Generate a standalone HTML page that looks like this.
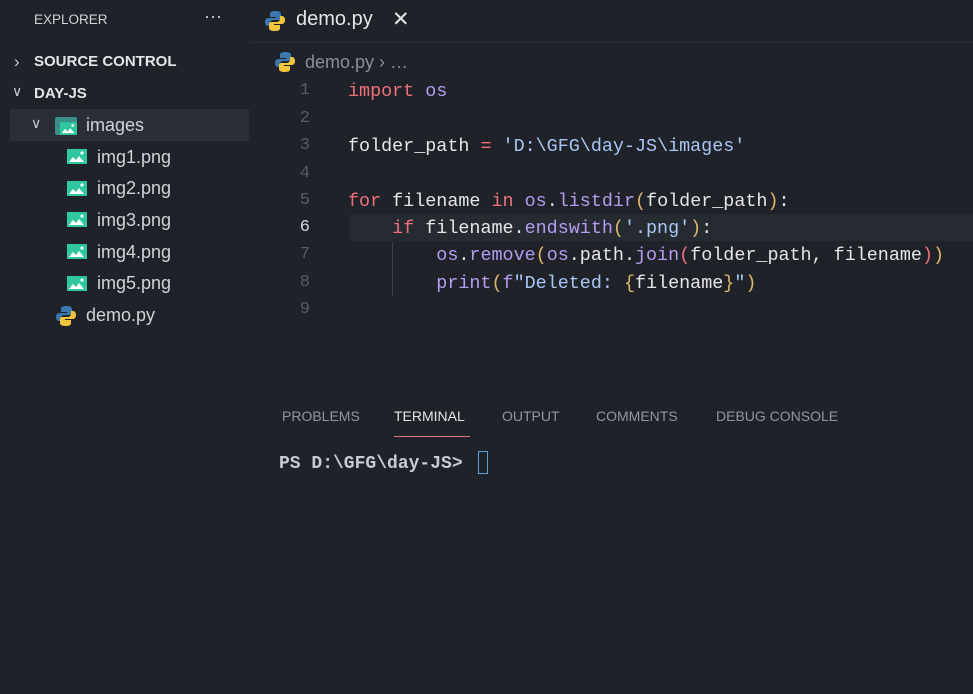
<!DOCTYPE html>
<html><head><style>
body{margin:0;width:973px;height:694px;background:#1f2228;font-family:"Liberation Sans",sans-serif;color:#d7dae0;overflow:hidden;position:relative}
.a{position:absolute;white-space:pre}
.m{font-family:"Liberation Mono",monospace;font-size:18.4px}
.k{color:#f0707a}.p{color:#b49cf0}.s{color:#a9c6f5}.y{color:#e2b86b}.t{color:#e6e6e6}
.ln{color:#565d6b;font-family:"Liberation Mono",monospace;font-size:17px;width:30px;text-align:right;left:280px}
.side{font-size:18px;color:#d0d3d8}
.img{position:absolute;width:20px;height:15px}
.tab{font-size:14px;top:408px}
</style></head><body>
<svg width="0" height="0" style="position:absolute"><defs><symbol id="im" viewBox="0 0 20 15"><rect width="20" height="15" fill="#2fc6a0"/><path d="M2 13l4-5 3 3 3-4 5 6z" fill="#fff"/><circle cx="15" cy="4" r="1.6" fill="#fff"/></symbol></defs></svg>
<div class="a" style="left:250px;top:42px;width:723px;height:1px;background:#2a2e35"></div>
<div class="a" style="left:34px;top:12px;font-size:13.5px;color:#d0d3d8">EXPLORER</div>
<div class="a" style="left:204px;top:6px;font-size:18px;color:#d0d3d8">···</div>
<svg class="a" style="left:265px;top:10px" width="20" height="22" viewBox="0 0 20 22"><path d="M10 1C5 1 5 3 5 4v3h6v1H3C1 8 0 10 0 12s1 4 3 4h2v-3c0-2 2-3 4-3h5c1 0 2-1 2-2V4c0-2-2-3-6-3z" fill="#3b78b0"/><path d="M10 21c5 0 5-2 5-3v-3H9v-1h8c2 0 3-2 3-4s-1-4-3-4h-2v3c0 2-2 3-4 3H6c-1 0-2 1-2 2v4c0 2 2 3 6 3z" fill="#f3c53d"/></svg>
<div class="a" style="left:296px;top:8px;font-size:20px;color:#e3e5e8">demo.py</div>
<div class="a" style="left:392px;top:7px;font-size:21px;color:#e3e5e8">✕</div>
<div class="a" style="left:14px;top:52px;font-size:17px;color:#c8cbd0">›</div>
<div class="a" style="left:34px;top:53px;font-size:15px;font-weight:bold;color:#e3e5e8">SOURCE CONTROL</div>
<div class="a" style="left:12px;top:83px;font-size:14px;color:#c8cbd0">∨</div>
<div class="a" style="left:34px;top:85px;font-size:15px;font-weight:bold;color:#e3e5e8">DAY-JS</div>
<div class="a" style="left:10px;top:109px;width:239px;height:32px;background:#2a2e36"></div>
<div class="a" style="left:31px;top:115px;font-size:14px;color:#c8cbd0">∨</div>
<div class="a" style="left:55px;top:117px;width:22px;height:18px;background:#3a8f8a;border-radius:2px"></div>
<svg class="img" style="left:60px;top:122px;width:17px;height:13px"><use href="#im"/></svg>
<div class="a side" style="left:86px;top:115px">images</div>
<svg class="img" style="left:67px;top:149px"><use href="#im"/></svg><div class="a side" style="left:97px;top:147px">img1.png</div>
<svg class="img" style="left:67px;top:181px"><use href="#im"/></svg><div class="a side" style="left:97px;top:178px">img2.png</div>
<svg class="img" style="left:67px;top:212px"><use href="#im"/></svg><div class="a side" style="left:97px;top:210px">img3.png</div>
<svg class="img" style="left:67px;top:244px"><use href="#im"/></svg><div class="a side" style="left:97px;top:242px">img4.png</div>
<svg class="img" style="left:67px;top:276px"><use href="#im"/></svg><div class="a side" style="left:97px;top:273px">img5.png</div>
<svg class="a" style="left:56px;top:305px" width="20" height="22" viewBox="0 0 20 22"><path d="M10 1C5 1 5 3 5 4v3h6v1H3C1 8 0 10 0 12s1 4 3 4h2v-3c0-2 2-3 4-3h5c1 0 2-1 2-2V4c0-2-2-3-6-3z" fill="#3b78b0"/><path d="M10 21c5 0 5-2 5-3v-3H9v-1h8c2 0 3-2 3-4s-1-4-3-4h-2v3c0 2-2 3-4 3H6c-1 0-2 1-2 2v4c0 2 2 3 6 3z" fill="#f3c53d"/></svg>
<div class="a side" style="left:86px;top:305px">demo.py</div>
<svg class="a" style="left:275px;top:51px" width="20" height="22" viewBox="0 0 20 22"><path d="M10 1C5 1 5 3 5 4v3h6v1H3C1 8 0 10 0 12s1 4 3 4h2v-3c0-2 2-3 4-3h5c1 0 2-1 2-2V4c0-2-2-3-6-3z" fill="#3b78b0"/><path d="M10 21c5 0 5-2 5-3v-3H9v-1h8c2 0 3-2 3-4s-1-4-3-4h-2v3c0 2-2 3-4 3H6c-1 0-2 1-2 2v4c0 2 2 3 6 3z" fill="#f3c53d"/></svg>
<div class="a" style="left:305px;top:52px;font-size:18px;color:#8a8f99">demo.py › …</div>
<div class="a" style="left:350px;top:214px;width:623px;height:27px;background:#262a31"></div>
<div class="a" style="left:392px;top:242px;width:1px;height:54px;background:#3c414a"></div>
<div class="a ln" style="top:81px">1</div><div class="a ln" style="top:109px">2</div><div class="a ln" style="top:136px">3</div><div class="a ln" style="top:164px">4</div><div class="a ln" style="top:191px">5</div><div class="a ln" style="top:218px;color:#d7dae0">6</div><div class="a ln" style="top:245px">7</div><div class="a ln" style="top:273px">8</div><div class="a ln" style="top:300px">9</div>
<div class="a m t" style="left:348px;top:81px"><span class="k">import</span> <span class="p">os</span></div>
<div class="a m t" style="left:348px;top:136px">folder_path <span class="k">=</span> <span class="s">'D:\GFG\day-JS\images'</span></div>
<div class="a m t" style="left:348px;top:191px"><span class="k">for</span> filename <span class="k">in</span> <span class="p">os</span>.<span class="p">listdir</span><span class="y">(</span>folder_path<span class="y">)</span>:</div>
<div class="a m t" style="left:348px;top:218px">    <span class="k">if</span> filename.<span class="p">endswith</span><span class="y">(</span><span class="s">'.png'</span><span class="y">)</span>:</div>
<div class="a m t" style="left:348px;top:245px">        <span class="p">os</span>.<span class="p">remove</span><span class="y">(</span><span class="p">os</span>.path.<span class="p">join</span><span class="k">(</span>folder_path, filename<span class="k">)</span><span class="y">)</span></div>
<div class="a m t" style="left:348px;top:273px">        <span class="p">print</span><span class="y">(</span><span class="p">f</span><span class="s">"Deleted: </span><span class="y">{</span>filename<span class="y">}</span><span class="s">"</span><span class="y">)</span></div>
<div class="a tab" style="left:282px;color:#8f96a3">PROBLEMS</div>
<div class="a tab" style="left:394px;color:#e6e6e6">TERMINAL</div>
<div class="a" style="left:394px;top:436px;width:76px;height:1px;background:#e07a7a"></div>
<div class="a tab" style="left:502px;color:#8f96a3">OUTPUT</div>
<div class="a tab" style="left:596px;color:#8f96a3">COMMENTS</div>
<div class="a tab" style="left:716px;color:#8f96a3">DEBUG CONSOLE</div>
<div class="a" style="left:279px;top:454px;font-family:'Liberation Mono',monospace;font-size:18px;font-weight:bold;color:#c8ccd2">PS D:\GFG\day-JS&gt;</div>
<div class="a" style="left:478px;top:451px;width:8px;height:21px;border:1px solid #5a9fd8"></div>
</body></html>
